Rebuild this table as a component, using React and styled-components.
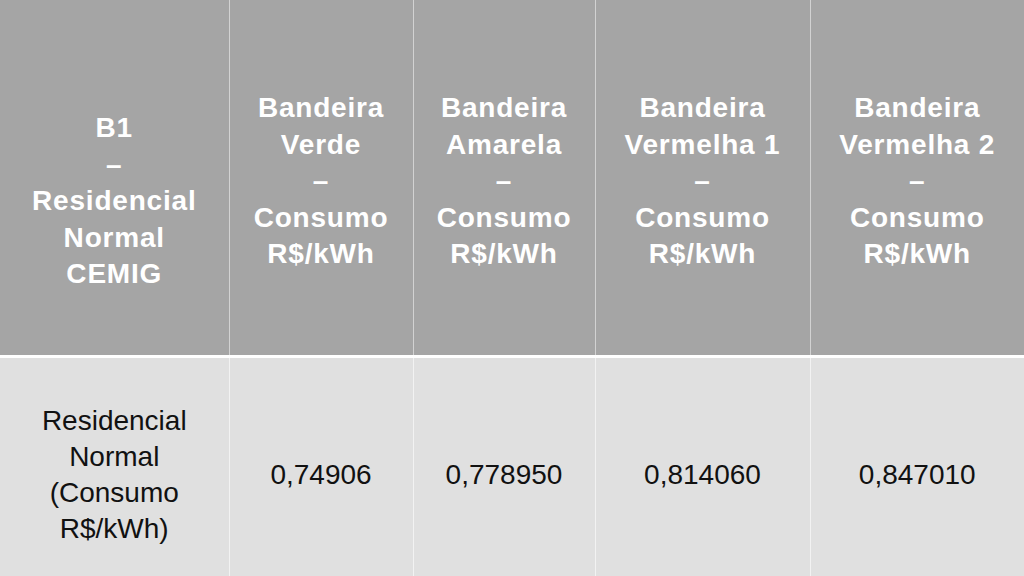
import React from 'react';
import styled, { createGlobalStyle } from 'styled-components';

const GlobalStyle = createGlobalStyle`
  html, body {
    margin: 0;
    padding: 0;
    background: #e0e0e0;
    overflow: hidden;
  }
`;

const Table = styled.table`
  width: 1024px;
  height: 590px;
  border-collapse: collapse;
  table-layout: fixed;
  font-family: "Liberation Sans", Arial, sans-serif;
`;

const HeadRow = styled.tr`
  height: 356px;
  background: #a5a5a5;
`;

const BodyRow = styled.tr`
  height: 234px;
  background: #e0e0e0;
`;

const HeadCell = styled.th`
  color: #ffffff;
  font-size: 28px;
  font-weight: bold;
  letter-spacing: 0.8px;
  line-height: 36.5px;
  text-align: center;
  vertical-align: middle;
  padding: ${(p) => (p.$lowered ? '48px 0 0' : '8px 0 0')};
  border-left: 1.5px solid #d2d2d2;
  border-bottom: 3px solid #ffffff;
  &:first-child {
    border-left: none;
  }
`;

const BodyCell = styled.td`
  color: #111111;
  font-size: 28px;
  line-height: 36px;
  text-align: center;
  vertical-align: middle;
  padding: 2px 0 0;
  border-left: 1.5px solid #f2f2f2;
  &:first-child {
    border-left: none;
  }
`;

const columns = [
  { width: 229, head: ['B1', '–', 'Residencial', 'Normal', 'CEMIG'] },
  { width: 184, head: ['Bandeira', 'Verde', '–', 'Consumo', 'R$/kWh'] },
  { width: 182, head: ['Bandeira', 'Amarela', '–', 'Consumo', 'R$/kWh'] },
  { width: 215, head: ['Bandeira', 'Vermelha 1', '–', 'Consumo', 'R$/kWh'] },
  { width: 214, head: ['Bandeira', 'Vermelha 2', '–', 'Consumo', 'R$/kWh'] },
];

const values = [
  ['Residencial', 'Normal', '(Consumo', 'R$/kWh)'],
  ['0,74906'],
  ['0,778950'],
  ['0,814060'],
  ['0,847010'],
];

const Lines = ({ lines }) =>
  lines.map((line, i) => (
    <React.Fragment key={i}>
      {i > 0 && <br />}
      {line}
    </React.Fragment>
  ));

export default function App() {
  return (
    <>
      <GlobalStyle />
      <Table>
        <colgroup>
          {columns.map((c, i) => (
            <col key={i} style={{ width: c.width }} />
          ))}
        </colgroup>
        <thead>
          <HeadRow>
            {columns.map((c, i) => (
              <HeadCell key={i} $lowered={i === 0}>
                <Lines lines={c.head} />
              </HeadCell>
            ))}
          </HeadRow>
        </thead>
        <tbody>
          <BodyRow>
            {values.map((v, i) => (
              <BodyCell key={i}>
                <Lines lines={v} />
              </BodyCell>
            ))}
          </BodyRow>
        </tbody>
      </Table>
    </>
  );
}
